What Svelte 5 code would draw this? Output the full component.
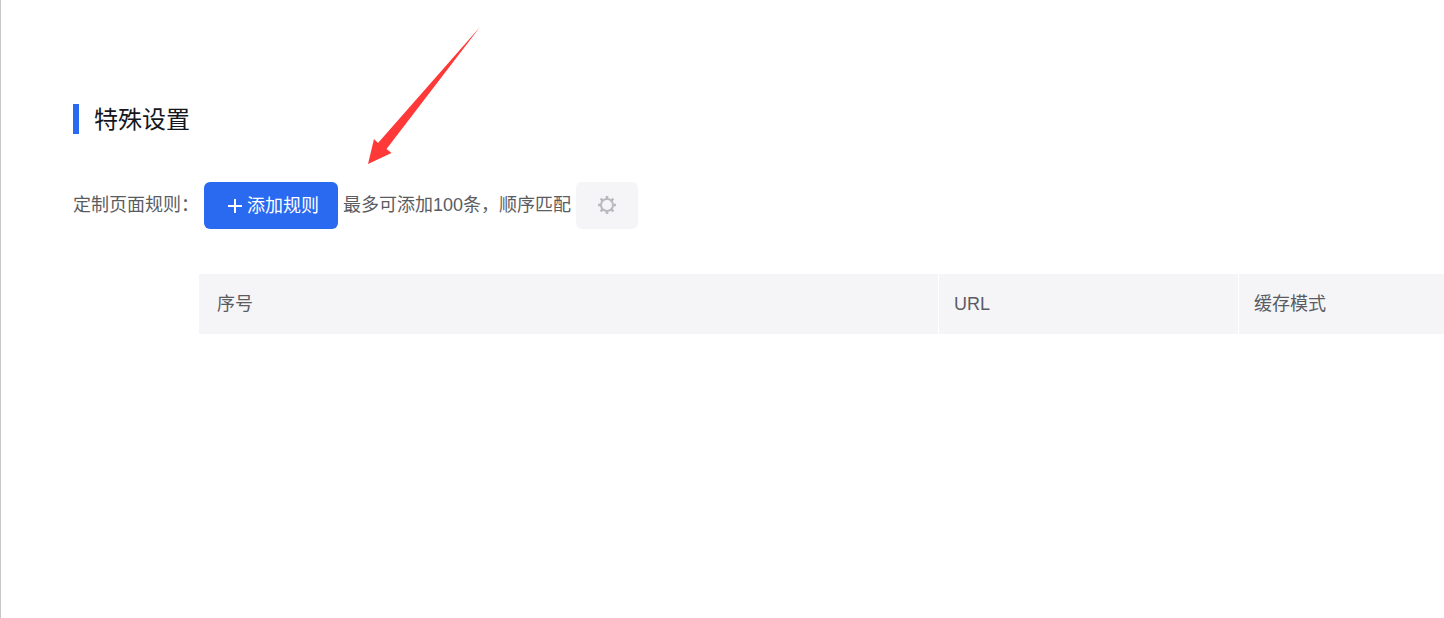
<script lang="ts">
  const maxRules = 100;
  const columns = [
    { key: 'index', title: '序号' },
    { key: 'url', title: 'URL' },
    { key: 'mode', title: '缓存模式' }
  ];
</script>

<main class="page">
  <h2 class="title">特殊设置</h2>

  <section class="rules">
    <span class="label" id="rules-label">定制页面规则：</span>
    <div class="content">
      <div class="toolbar">
        <button class="btn add-btn" type="button">
          <svg width="16" height="16" viewBox="0 0 16 16" aria-hidden="true">
            <path d="M8 1v14M1 8h14" stroke="currentColor" stroke-width="2" />
          </svg>
          添加规则
        </button>
        <span>最多可添加{maxRules}条，顺序匹配</span>
        <button class="btn settings-btn" type="button" aria-label="设置">
          <svg width="20" height="19" viewBox="0 0 20 19" fill="none" stroke="currentColor" aria-hidden="true">
            <circle cx="10" cy="9" r="6" stroke-width="2" />
            <path
              d="M10 0v3M10 15v3M1 9h3M16 9h3M3.6 2.6l2.1 2.1M14.3 13.3l2.1 2.1M3.6 15.4l2.1-2.1M14.3 4.7l2.1-2.1"
              stroke-width="2.6"
            />
          </svg>
        </button>
      </div>

      <table class="table" aria-labelledby="rules-label">
        <thead>
          <tr>
            {#each columns as column (column.key)}
              <th class={column.key} scope="col">{column.title}</th>
            {/each}
          </tr>
        </thead>
      </table>
    </div>
  </section>

  <svg class="arrow" width="114" height="140" viewBox="0 0 114 140" aria-hidden="true">
    <path d="M114 1L20.5 123L25.5 127L2 138L8 113L12 117Z" fill="#ff3838" />
  </svg>
</main>

<style>
  :global(body) {
    background: #fff;
  }

  .page {
    position: relative;
    box-sizing: border-box;
    min-height: 100vh;
    padding: 104px 0 0 72px;
    border-left: 1px solid #c8c8c8;
    color: #5a5c62;
    font-family: 'Liberation Sans', 'Noto Sans CJK SC', sans-serif;
    font-size: 18px;
    line-height: 46px;
    overflow: hidden;
  }

  .title {
    box-sizing: border-box;
    height: 30px;
    margin: 0 0 48px;
    padding-left: 15px;
    border-left: 6px solid #2a6af0;
    color: #15171c;
    font-size: 24px;
    font-weight: 400;
    line-height: 32px;
  }

  .rules {
    display: flex;
  }

  .label {
    flex: none;
  }

  .content {
    flex: 1;
    min-width: 0;
  }

  .toolbar {
    display: flex;
    gap: 5px;
    margin-bottom: 45px;
    padding-left: 5px;
    white-space: nowrap;
  }

  .btn {
    display: flex;
    align-items: center;
    justify-content: center;
    height: 47px;
    border: none;
    border-radius: 6px;
    font: inherit;
    cursor: pointer;
  }

  .add-btn {
    gap: 4px;
    padding: 0 19px 0 23px;
    background: #2a6af0;
    color: #fff;
  }

  .settings-btn {
    padding: 0 21px;
    background: #f5f5f8;
    color: #b8babd;
  }

  .table {
    width: 100%;
    border-collapse: separate;
    border-spacing: 0;
    table-layout: fixed;
  }

  .table th {
    box-sizing: border-box;
    height: 60px;
    padding: 0 15px;
    border-left: 1px solid #fff;
    background: #f5f5f8;
    font-weight: 400;
    text-align: left;
  }

  .table th.index {
    padding-left: 18px;
    border-left: none;
  }

  .table th.url {
    width: 300px;
  }

  .table th.mode {
    width: 206px;
  }

  .arrow {
    position: absolute;
    top: 26px;
    left: 365px;
    pointer-events: none;
  }
</style>
